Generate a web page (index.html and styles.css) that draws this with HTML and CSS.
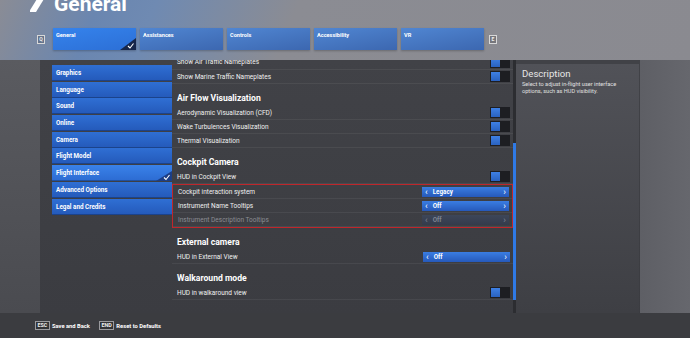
FILE: index.html
```html
<!DOCTYPE html>
<html lang="en">
<head>
    <meta charset="UTF-8">
    <title>General - Flight Interface</title>
    <link rel="stylesheet" href="styles.css">
</head>
<body>
    <div class="header">
        <div class="title-row">
            <svg class="logo" width="18" height="16" viewBox="0 0 18 16"><polygon points="10,-4 17,-4 6,14 -1,14" fill="#fff"/></svg>
            <h1>General</h1>
        </div>
        <div class="tabs">
            <span class="key">Q</span>
            <div class="tab selected">General
                <svg class="tick" width="16" height="12" viewBox="0 0 16 12"><polygon points="16,0 16,12 0,12" fill="#16264a"/><polyline points="8,8 10,10 13.5,5.5" fill="none" stroke="#fff" stroke-width="1.1"/></svg>
            </div>
            <div class="tab">Assistances</div>
            <div class="tab">Controls</div>
            <div class="tab">Accessibility</div>
            <div class="tab">VR</div>
            <span class="key">E</span>
        </div>
    </div>

    <div class="main">
        <div class="gutter"></div>
        <div class="panel">
            <ul class="sidebar">
                <li>Graphics</li>
                <li>Language</li>
                <li>Sound</li>
                <li>Online</li>
                <li>Camera</li>
                <li>Flight Model</li>
                <li class="active">Flight Interface
                    <svg class="tick" width="16" height="10" viewBox="0 0 16 10"><polygon points="16,0 16,10 0,10" fill="#1c3e86"/><polyline points="8,6.5 10,8.5 13.5,4" fill="none" stroke="#fff" stroke-width="1.1"/></svg>
                </li>
                <li>Advanced Options</li>
                <li>Legal and Credits</li>
            </ul>

            <div class="list">
                <div class="row first"><span>Show Air Traffic Nameplates</span><span class="toggle"><i></i></span></div>
                <div class="row"><span>Show Marine Traffic Nameplates</span><span class="toggle"><i></i></span></div>

                <div class="heading">Air Flow Visualization</div>
                <div class="row"><span>Aerodynamic Visualization (CFD)</span><span class="toggle"><i></i></span></div>
                <div class="row"><span>Wake Turbulences Visualization</span><span class="toggle"><i></i></span></div>
                <div class="row"><span>Thermal Visualization</span><span class="toggle"><i></i></span></div>

                <div class="heading">Cockpit Camera</div>
                <div class="row"><span>HUD in Cockpit View</span><span class="toggle"><i></i></span></div>
                <div class="marked">
                    <div class="row"><span>Cockpit interaction system</span>
                        <span class="picker"><b>&lsaquo;</b><span class="value">Legacy</span><b>&rsaquo;</b></span></div>
                    <div class="row"><span>Instrument Name Tooltips</span>
                        <span class="picker"><b>&lsaquo;</b><span class="value">Off</span><b>&rsaquo;</b></span></div>
                    <div class="row disabled"><span>Instrument Description Tooltips</span>
                        <span class="picker"><b>&lsaquo;</b><span class="value">Off</span><b>&rsaquo;</b></span></div>
                </div>

                <div class="heading">External camera</div>
                <div class="row"><span>HUD in External View</span>
                    <span class="picker"><b>&lsaquo;</b><span class="value">Off</span><b>&rsaquo;</b></span></div>

                <div class="heading">Walkaround mode</div>
                <div class="row"><span>HUD in walkaround view</span><span class="toggle"><i></i></span></div>
            </div>

            <div class="scrollbar"><div class="thumb"></div></div>

            <div class="description">
                <h2>Description</h2>
                <p>Select to adjust in-flight user interface options, such as HUD visibility.</p>
            </div>
        </div>
        <div class="side"></div>
    </div>

    <div class="footer">
        <span class="key-btn"><span class="key">ESC</span>Save and Back</span>
        <span class="key-btn"><span class="key">END</span>Reset to Defaults</span>
    </div>
</body>
</html>
```

FILE: styles.css
```css
body {
    margin: 0;
    width: 690px;
    height: 338px;
    overflow: hidden;
    font-family: Roboto, 'Liberation Sans', Arial, sans-serif;
    color: #fff;
    background-color: #3c3d42;
}
.header {
    display: flow-root;
    height: 60px;
    padding-left: 30px;
    box-sizing: border-box;
    background: linear-gradient(112deg, #8a8c95 0%, #6a86b0 14%, #6f8ab2 22%, #8b8c93 42%, #8a8a90 100%);
}
.title-row {
    display: flex;
    align-items: flex-start;
    gap: 6px;
    height: 16px;
    margin-top: -8px;
}
.logo {
    margin-top: 6px;
}
h1 {
    margin: 0;
    font-size: 21px;
    line-height: 24px;
    font-weight: bold;
    color: #fff;
}
.tabs {
    display: flex;
    align-items: center;
    gap: 4px;
    margin-top: 20px;
    margin-left: 7px;
}
.key {
    display: inline-block;
    border: 1px solid #d8d8d8;
    font-size: 5px;
    line-height: 7px;
    padding: 0 1px;
    min-width: 4px;
    text-align: center;
    font-weight: bold;
    color: #eee;
    background-color: rgba(0, 0, 0, 0.15);
}
.tabs .key:first-child {
    margin-right: 4px;
}
.tabs .key:last-child {
    margin-left: 1px;
}
.tab {
    position: relative;
    width: 83px;
    height: 22px;
    box-sizing: border-box;
    padding: 4px 3px;
    font-size: 5.6px;
    font-weight: bold;
    color: #fff;
    background: linear-gradient(170deg, #5086d2, #3c67b0);
    box-shadow: 0 1px 2px rgba(0, 0, 0, 0.25);
}
.tab.selected {
    background: linear-gradient(170deg, #3583ec, #2c6fd6);
}
.tab .tick {
    position: absolute;
    right: 0;
    bottom: 0;
}
.main {
    display: flex;
    height: 253px;
}
.gutter {
    width: 40px;
    background: linear-gradient(#5a5b60, #4a4b50);
}
.panel {
    display: flex;
    width: 600px;
    overflow: hidden;
    background: linear-gradient(#414247, #3b3c41);
}
.sidebar {
    list-style: none;
    margin: 0;
    padding: 5px 0 0 12px;
    width: 120px;
}
.sidebar li {
    position: relative;
    height: 16px;
    margin-bottom: 0.7px;
    padding-left: 4px;
    font-size: 6.3px;
    font-weight: bold;
    line-height: 16px;
    background: linear-gradient(#2f6fd4, #2459b9);
    box-shadow: inset 0 -1px 0 rgba(0, 0, 0, 0.25);
}
.sidebar li.active {
    background: linear-gradient(#3a82ea, #2c6bd2);
}
.sidebar .tick {
    position: absolute;
    right: 0;
    bottom: 0;
}
.list {
    width: 341px;
    margin-top: -5px;
}
.row {
    display: flex;
    align-items: center;
    justify-content: space-between;
    height: 14px;
    box-sizing: border-box;
    padding: 0 3px 0 5px;
    font-size: 6.5px;
    color: #f0f0f0;
    border-bottom: 1px solid rgba(255, 255, 255, 0.06);
}
.row.first {
    height: 15px;
}
.row.disabled {
    color: #8b8d93;
}
.heading {
    display: flex;
    align-items: flex-end;
    height: 22px;
    box-sizing: border-box;
    padding: 0 0 3px 5px;
    font-size: 8.6px;
    line-height: 10px;
    font-weight: bold;
    color: #fff;
}
.toggle {
    display: flex;
    width: 20px;
    height: 11px;
    box-sizing: border-box;
    padding: 1px;
    background-color: #1d1e22;
}
.toggle i {
    width: 9px;
    height: 9px;
    background: linear-gradient(#3e80e4, #2a62c0);
}
.marked {
    border: 1px solid #c0262b;
}
.picker {
    display: flex;
    align-items: center;
    width: 87px;
    height: 10px;
    padding: 0 3px;
    box-sizing: border-box;
    font-size: 6.3px;
    font-weight: bold;
    color: #fff;
    background: linear-gradient(#3a7de2, #2659ba);
}
.picker b {
    font-size: 9px;
    line-height: 10px;
    font-weight: normal;
}
.picker .value {
    flex: 1;
    padding-left: 5px;
}
.disabled .picker {
    color: #7f8592;
    background: linear-gradient(#3d4659, #343b4b);
}
.scrollbar {
    width: 3px;
    background-color: #2c2d31;
}
.thumb {
    margin-top: 83px;
    height: 157px;
    background-color: #2f7ae6;
}
.description {
    width: 123px;
    margin-top: 4px;
    padding: 4px 6px;
    box-sizing: border-box;
    background: linear-gradient(#515258, #3e3f44);
}
.description h2 {
    margin: 0 0 2px;
    font-size: 9.6px;
    font-weight: normal;
    color: #e6e6e6;
}
.description p {
    margin: 0;
    font-size: 5.6px;
    line-height: 7px;
    color: #e0e0e0;
}
.side {
    flex: 1;
    background: linear-gradient(90deg, #5e5f65, #66676d);
}
.footer {
    display: flex;
    align-items: center;
    gap: 9px;
    height: 25px;
    padding-left: 35px;
    background-color: #3b3c40;
}
.key-btn {
    display: flex;
    align-items: center;
    gap: 2px;
    font-size: 5.8px;
    font-weight: bold;
}
.key-btn .key {
    font-size: 5.4px;
    padding: 0 1.5px;
    border-color: #9a9a9e;
}
```
